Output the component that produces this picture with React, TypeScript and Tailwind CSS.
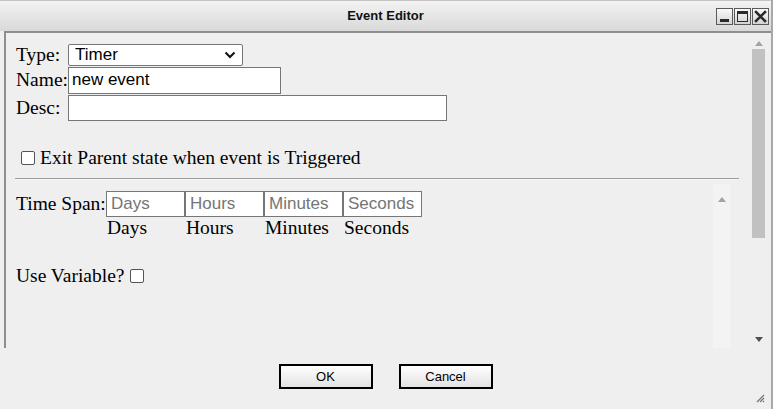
import React from "react";

const serif = "font-['Liberation_Serif',serif]";
const sans = "font-['Liberation_Sans',Arial,sans-serif]";

const WinButton = ({ kind }: { kind: "min" | "max" | "close" }) => (
  <div className="w-[17px] h-[17px] border border-[#5a5a5a] bg-gradient-to-b from-[#fafafa] to-[#d4d4d4] flex items-center justify-center">
    <svg width="13" height="13" viewBox="0 0 13 13">
      {kind === "min" && <rect x="2" y="9" width="9" height="3" fill="#2a2a2a" />}
      {kind === "max" && (
        <>
          <rect x="1.5" y="1.5" width="10" height="10" fill="none" stroke="#2a2a2a" strokeWidth="1" />
          <rect x="1" y="1" width="11" height="3" fill="#2a2a2a" />
        </>
      )}
      {kind === "close" && (
        <path d="M2 2 L11 11 M11 2 L2 11" stroke="#2a2a2a" strokeWidth="2.6" strokeLinecap="square" />
      )}
    </svg>
  </div>
);

const Arrow = ({ up, color }: { up?: boolean; color: string }) => (
  <svg width="8" height="5" viewBox="0 0 8 5">
    {up ? <path d="M0 5 L4 0 L8 5 Z" fill={color} /> : <path d="M0 0 L8 0 L4 5 Z" fill={color} />}
  </svg>
);

const Check = () => (
  <div className="w-[14px] h-[14px] border border-[#555] rounded-[2px] bg-white shrink-0" />
);

const App = () => {
  const spans = ["Days", "Hours", "Minutes", "Seconds"];

  return (
    <div className={`w-[773px] h-[409px] bg-[#efefef] flex flex-col overflow-hidden border-r-2 border-[#a8a8a8] ${serif} text-black`}>
      {/* title bar */}
      <div className="h-[31px] shrink-0 grid grid-cols-[1fr_auto_1fr] items-center border-t border-[#c4c4c4] bg-gradient-to-b from-[#f3f3f3] to-[#d9d9d9]">
        <div />
        <span className={`${sans} font-bold text-[13px] text-[#111]`}>Event Editor</span>
        <div className="flex justify-end gap-px pr-[2px]">
          <WinButton kind="min" />
          <WinButton kind="max" />
          <WinButton kind="close" />
        </div>
      </div>

      {/* scroll panel */}
      <div className="h-[317px] shrink-0 ml-[4px] border-l-2 border-t-2 border-[#8e8e8e] flex">
        <div className="flex-1 flex flex-col">
          <div className="pl-[10px] pt-[11px] text-[19.5px] leading-[22px] whitespace-nowrap">
            <div className="flex items-center h-[22px]">
              <span className="w-[52px]">Type:</span>
              <div className={`${sans} w-[175px] h-[22px] bg-white border border-[#767676] rounded-[2px] flex items-center justify-between pl-[6px] pr-[6px] text-[17px]`}>
                <span>Timer</span>
                <svg width="12" height="8" viewBox="0 0 12 8">
                  <path d="M1.5 1.5 L6 6 L10.5 1.5" stroke="#111" strokeWidth="2" fill="none" />
                </svg>
              </div>
            </div>
            <div className="flex items-center h-[28px]">
              <span className="w-[52px]">Name:</span>
              <div className={`${sans} w-[213px] h-[27px] bg-white border border-[#767676] flex items-center pl-[3px] text-[17px]`}>
                new event
              </div>
            </div>
            <div className="flex items-center h-[27px]">
              <span className="w-[52px]">Desc:</span>
              <div className="w-[379px] h-[26px] bg-white border border-[#767676]" />
            </div>
            <div className="flex items-center h-[22px] mt-[26px] pl-[5px] gap-[5px]">
              <Check />
              <span>Exit Parent state when event is Triggered</span>
            </div>
          </div>
          <div className="ml-[9px] mr-[11px] mt-[9px] border-t border-[#9c9c9c] border-b border-b-[#f7f7f7]" />

          {/* inner scroll region */}
          <div className="flex-1 flex mr-[20px] mt-[4px]">
            <div className="flex-1 pl-[10px] pt-[7px] text-[19.5px] leading-[22px] whitespace-nowrap">
              <div className="flex items-center h-[26px]">
                <span className="w-[90px]">Time Span:</span>
                {spans.map((s) => (
                  <div key={s} className={`${sans} w-[79px] h-[26px] bg-white border border-[#767676] flex items-center pl-[4px] text-[17px] text-[#757575]`}>
                    {s}
                  </div>
                ))}
              </div>
              <div className="flex h-[24px] pl-[91px]">
                {spans.map((s) => (
                  <span key={s} className="w-[79px]">{s}</span>
                ))}
              </div>
              <div className="flex items-center gap-[6px] mt-[24px] h-[22px]">
                <span>Use Variable?</span>
                <Check />
              </div>
            </div>
            <div className="w-[17px] bg-[#f3f3f3] flex justify-center pt-[13px]">
              <Arrow up color="#a3a3a3" />
            </div>
          </div>
        </div>

        {/* outer scrollbar */}
        <div className="w-[17px] mr-[4px] flex flex-col items-center pt-[8px] pb-[6px]">
          <Arrow up color="#a3a3a3" />
          <div className="w-[13px] h-[189px] bg-[#c1c1c1] mt-[3px]" />
          <div className="flex-1" />
          <Arrow color="#505050" />
        </div>
      </div>

      {/* footer */}
      <div className="flex-1 flex flex-col">
        <div className="flex justify-center gap-[26px] pt-[16px]">
          {["OK", "Cancel"].map((b) => (
            <div key={b} className={`${sans} w-[94px] h-[25px] border-2 border-black bg-gradient-to-b from-[#ffffff] to-[#e2e2e2] flex items-center justify-center text-[13px]`}>
              {b}
            </div>
          ))}
        </div>
        <div className="flex-1 flex justify-end items-end pr-[6px] pb-[6px]">
          <svg width="10" height="10" viewBox="0 0 10 10">
            <path d="M9 2 L2 9 M9 5 L5 9 M9 8 L8 9" stroke="#777" strokeWidth="1.3" />
          </svg>
        </div>
      </div>
    </div>
  );
};

export default App;
